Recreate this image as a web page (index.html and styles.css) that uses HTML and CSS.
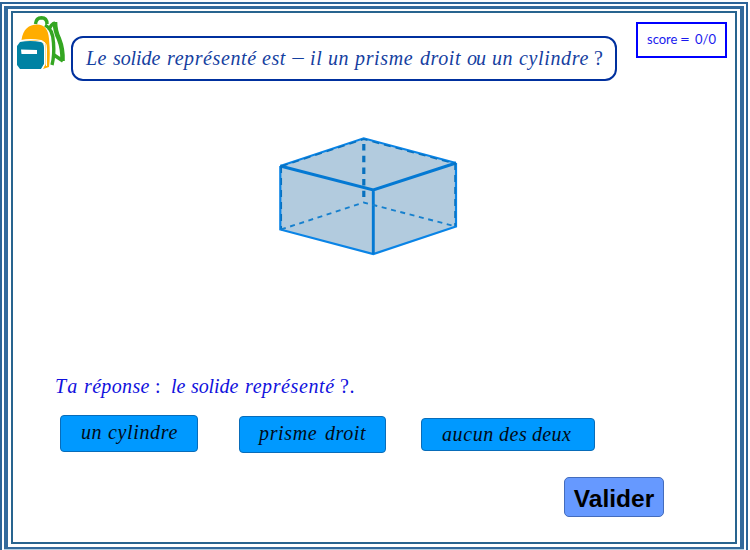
FILE: index.html
```html
<!DOCTYPE html>
<html lang="fr">
<head>
<meta charset="utf-8">
<title>Prisme droit ou cylindre</title>
<link rel="stylesheet" href="styles.css">
</head>
<body>
<div class="frame-outer"><div class="frame-middle"><main class="frame-inner">
  <header class="top">
    <svg class="bag" width="50" height="56" viewBox="0 0 50 56" aria-hidden="true">
      <g fill="none" stroke="#34a622">
        <path d="M18.5 9 Q19 3 24.5 2.8 Q30 3 30 9" stroke-width="3.4"/>
        <path d="M28 10 Q36 14 36.5 28 Q37.5 40 35 50" stroke-width="3.4"/>
        <path d="M32 15 Q34 9 38 8" stroke-width="3.4"/>
        <path d="M38 7 Q38 16 42 24 Q46 34 45.5 46" stroke-width="4.6"/>
        <path d="M46 46 L37 40" stroke-width="3.6"/>
      </g>
      <path d="M4.5 25 C6 14 12 9.5 20 9.5 C28 9.5 31.5 15 32 24 Q33.5 40 32 52 L26 54 L28 49 V31 L25 26 Z" fill="#ffad00"/>
      <path d="M27 27 Q30 29 29.5 34 V51" fill="none" stroke="#fff" stroke-width="1"/>
      <path d="M3 27 Q13 25 24 27 Q27 28 27 33 V49 L24 54 H3 L0 50 V31 Z" fill="#0082a3"/>
      <path d="M4 25.5 Q13 23.5 24 25.5 Q28.3 27 28 33 V49 L25 54" fill="none" stroke="#fff" stroke-width="1.2"/>
      <path d="M4 34.5 L20 35 V39 H4.5 Z" fill="#fff"/>
    </svg>
    <h1 class="question math">
      <span class="close">Le</span> <span class="tight">solide</span> <span>représenté</span> <span>est</span>
      <span class="minus">−</span> <span>il</span> <span>un</span> <span class="mid">prisme</span>
      <span>droit</span> <span class="narrow">ou</span> <span>un</span> <span class="mid">cylindre</span> <span class="up">?</span>
    </h1>
    <div class="score"><span>score</span> <span class="equals">=</span> <span>0/0</span></div>
  </header>
  <svg class="solid" width="190" height="130" viewBox="273 130 190 130" role="img" aria-label="Solide">
    <path d="M363.7 138 L456 162.8 V226.5 L373.3 254 L280.2 229.5 V165.8Z" fill="#b2cbde"/>
    <g fill="none" stroke="#0a84e6">
      <path d="M280.3 166 V229.5 L373.3 254 L456 226.5 V163" stroke-width="2.2"/>
      <path d="M280.3 166 L363.7 138.3 L456 163" stroke-width="2.2"/>
      <path d="M280.3 166 L373.3 190 L456 163 M373.3 190 V254" stroke="#0479d3" stroke-width="2.9"/>
    </g>
    <g fill="none" stroke="#0871bf">
      <path d="M281.3 166 V229 M455 163 V226 M281 166.5 L363.7 139.3 L456 164" stroke-width="1.5" stroke-dasharray="7 5"/>
      <path d="M363.8 144 V197" stroke-width="3.2" stroke-dasharray="6.5 5.2"/>
      <path d="M281 229.5 L363.7 202.5 L456 226.5" stroke="#1680ce" stroke-width="1.9" stroke-dasharray="5 4.6"/>
    </g>
  </svg>
  <p class="answer math">
    <span class="airy">Ta</span> <span class="close">réponse</span> <span class="up">:</span> <span class="tight">le</span>
    <span class="tight">solide</span> <span>représenté</span> <span class="up">?</span><span>.</span>
  </p>
  <div class="choices">
    <button class="choice cylinder math"><span>un</span> <span class="mid">cylindre</span></button>
    <button class="choice prism math"><span class="mid">prisme</span> <span>droit</span></button>
    <button class="choice neither math"><span>aucun</span> <span>des</span> <span class="close">deux</span></button>
  </div>
  <button class="validate">Valider</button>
</main></div></div>
</body>
</html>
```
FILE: styles.css
```css
* { box-sizing: border-box; }
body { margin: 0; width: 750px; height: 550px; overflow: hidden; background: #fff; }
.frame-outer {
  width: 748px; height: 560px; margin-top: 2px; padding: 2px 2px 0 2px;
  border: 2px solid #2c6498;
}
.frame-middle {
  width: 740px; height: 543px; padding: 2px 3px 3px;
  border: 4px solid #336a9c; border-top-width: 3px; border-bottom-width: 2px;
  box-shadow: 0 1px #b4cfe0;
}
.frame-inner {
  display: flex; flex-direction: column; height: 533px; width: 726px;
  border: 2px solid #28648f;
}
.math { font: italic 20px "Liberation Serif", serif; letter-spacing: 0.6px; white-space: nowrap; }
.math .airy { letter-spacing: 3px; }
.math .mid { letter-spacing: 0.65px; }
.math .close { letter-spacing: 0.35px; }
.math .tight { letter-spacing: -0.1px; }
.math .narrow { letter-spacing: -1px; }
.up, .minus { font-style: normal; }
.minus { display: inline-block; transform: translateX(1px) scaleX(1.25); transform-origin: left; }
.top { display: flex; align-items: flex-start; height: 72px; }
.bag { margin: 2px 0 0 4px; flex: none; }
.question {
  display: grid; grid-template-columns: 27px 54px 95px 28px 20px 18px 27px 65px 47px 25px 27px 75px 10px;
  margin: 23px 0 0 4px; width: 546px; height: 45px; line-height: 40px; padding-left: 13px;
  border: 2px solid #00309e; border-radius: 12px; color: #15409f;
}
.minus { width: 12px; }
.score {
  display: grid; grid-template-columns: 33px 15px 22px;
  margin: 9px 0 0 19px; width: 91px; height: 36px; padding-left: 9px;
  border: 2px solid #0000ff; color: #1919ee; font: 13px/31px Lato, sans-serif; white-space: nowrap;
}
.equals { width: 8px; transform: scaleX(1.3); transform-origin: left; }
.solid { margin: 45px 0 0 260px; flex: none; }
.answer {
  display: grid; grid-template-columns: 29px 71px 16px 20px 54px 95px 10px 6px;
  margin: 114px 0 0 42px; line-height: 24px; height: 24px; color: #1111dd;
}
.choices { display: flex; align-items: flex-start; height: 38px; margin: 17px 0 0 47px; }
.choice {
  display: grid; align-content: center; text-align: left; padding: 0 0 2px;
  background: #0099ff; border: 1px solid #086cb9; border-radius: 4px; color: #000b16;
}
.cylinder { width: 138px; height: 37px; padding-left: 20px; grid-template-columns: 27px 70px; }
.prism { width: 147px; height: 37px; margin: 1px 0 0 41px; padding-left: 19px; grid-template-columns: 66px 41px; }
.neither { width: 174px; height: 33px; margin: 3px 0 0 35px; padding: 0 0 0 20px; grid-template-columns: 57px 33px 40px; }
.validate {
  width: 100px; height: 40px; margin: 24px 0 0 551px; padding: 4px 0 0;
  background: #6699ff; border: 1px solid #446cbc; border-radius: 5px;
  color: #000; font: bold 24.5px "Liberation Sans", sans-serif;
}
```
